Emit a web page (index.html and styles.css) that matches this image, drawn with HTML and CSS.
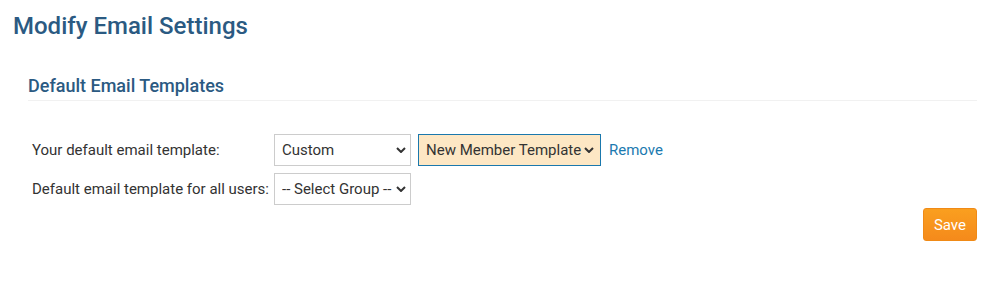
FILE: index.html
```html
<!DOCTYPE html>
<html lang="en">

<head>
  <meta charset="UTF-8">
  <meta name="viewport" content="width=device-width, initial-scale=1.0">
  <title>Modify Email Settings</title>
  <link rel="stylesheet" href="styles.css">
</head>

<body class="page">
  <h1 class="page-title">Modify Email Settings</h1>
  <div class="section">
    <h2 class="section-title">Default Email Templates</h2>
    <div class="settings-form">
      <label class="form-label" for="myTemplate">Your default email template:</label>
      <div class="form-field">
        <select id="myTemplate" class="form-select select-type">
          <option>Custom</option>
          <option>System</option>
        </select>
        <select class="form-select select-template">
          <option>New Member Template</option>
        </select>
        <a class="remove-link" href="#">Remove</a>
      </div>
      <label class="form-label" for="groupTemplate">Default email template for all users:</label>
      <div class="form-field">
        <select id="groupTemplate" class="form-select select-type">
          <option>-- Select Group --</option>
        </select>
      </div>
    </div>
    <div class="form-actions">
      <button class="save-button" type="button">Save</button>
    </div>
  </div>
</body>

</html>
```

FILE: styles.css
```css
body {
  margin: 0;
  padding: 12px 27px 0 13px;
  font-family: Roboto, "Liberation Sans", sans-serif;
  font-size: 15px;
  color: #333;
  background: #fff;
}

.page-title {
  margin: 0;
  font-size: 24px;
  font-weight: 500;
  line-height: 28px;
  color: #2b5a82;
}

.section {
  margin-top: 35px;
  padding-left: 15px;
}

.section-title {
  margin: 0;
  padding-bottom: 4px;
  font-size: 18px;
  font-weight: 500;
  line-height: 21px;
  color: #2b5a82;
  border-bottom: 1px solid #f1f1f1;
}

/*label column + field column*/
.settings-form {
  display: grid;
  grid-template-columns: auto 1fr;
  column-gap: 5px;
  row-gap: 7px;
  align-items: center;
  margin-top: 33px;
  padding-left: 4px;
}

.form-field {
  display: flex;
  align-items: center;
  gap: 7px;
}

.form-select {
  appearance: none;
  height: 32px;
  padding: 0 14px 0 7px;
  font-family: Roboto, "Liberation Sans", sans-serif;
  font-size: 15px;
  color: #333;
  background-color: #fff;
  background-image: url("data:image/svg+xml,%3Csvg xmlns='http://www.w3.org/2000/svg' width='10' height='6' viewBox='0 0 10 6'%3E%3Cpath d='M1 1l4 4 4-4' fill='none' stroke='%23333' stroke-width='2'/%3E%3C/svg%3E");
  background-repeat: no-repeat;
  background-position: right 4px center;
  border: 1px solid #ccc;
  border-radius: 0;
}

.select-type {
  width: 137px;
}

.select-template {
  width: 183px;
  background-position: right 6px center;
  background-color: #fde7c4;
  border-color: #1a78ad;
}

.remove-link {
  color: #1b7ab0;
  text-decoration: none;
  margin-left: 1px;
}

.form-actions {
  display: flex;
  justify-content: flex-end;
  margin-top: 3px;
}

.save-button {
  height: 33px;
  padding: 0 10px;
  font-family: Roboto, "Liberation Sans", sans-serif;
  font-size: 15px;
  color: #fff;
  background: linear-gradient(#fa9f1f, #f58a1b);
  border: 1px solid #f08a16;
  border-radius: 3px;
}
```
